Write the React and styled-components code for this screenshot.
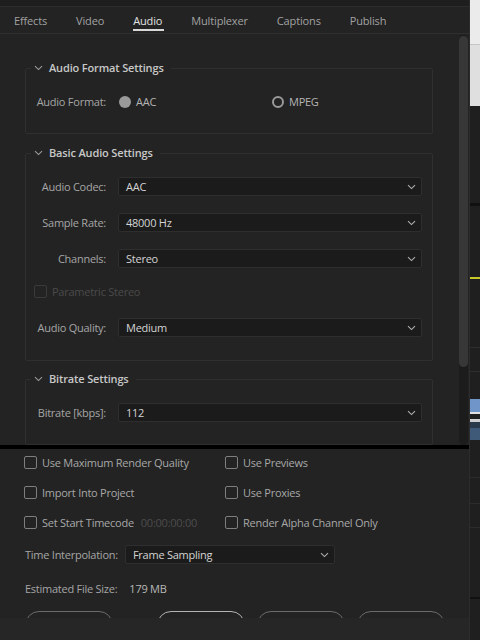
import React from "react";
import styled, { createGlobalStyle } from "styled-components";

const FONT = "'Open Sans', 'Noto Sans', 'Liberation Sans', sans-serif";

const GlobalStyle = createGlobalStyle`
  html, body {
    margin: 0;
    padding: 0;
    background: #1e1e1e;
  }
  body {
    font-family: ${FONT};
    font-size: 11px;
    letter-spacing: -0.25px;
    color: #a8a8a8;
  }
  * {
    box-sizing: border-box;
  }
`;

const Screen = styled.div`
  display: flex;
  width: 480px;
  height: 640px;
  overflow: hidden;
  background: #1e1e1e;
`;

const Dialog = styled.div`
  width: 470px;
  height: 100%;
  display: flex;
  flex-direction: column;
  background: #232323;
  border-right: 1px solid #2c2c2c;
`;

const TopGap = styled.div`
  height: 7px;
  flex: none;
  background: #1e1e1e;
  border-bottom: 1px solid #2c2c2c;
`;

const TabBar = styled.div`
  height: 27px;
  flex: none;
  display: flex;
  align-items: stretch;
  gap: 29px;
  padding-left: 14px;
  border-bottom: 1px solid #2f2f2f;
`;

const Tab = styled.div`
  position: relative;
  display: flex;
  align-items: center;
  font-size: 11px;
  letter-spacing: -0.15px;
  color: ${(p) => (p.$active ? "#e2e2e2" : "#a2a2a2")};

  &::after {
    content: "";
    display: ${(p) => (p.$active ? "block" : "none")};
    position: absolute;
    left: 0;
    right: -2px;
    bottom: 2px;
    height: 2px;
    background: #d8d8d8;
  }
`;

const Body = styled.div`
  height: 411px;
  flex: none;
  display: flex;
`;

const Content = styled.div`
  flex: 1;
  overflow: hidden;
  padding: 26px 0 0 25px;
`;

const ScrollTrack = styled.div`
  width: 9px;
  margin: 1px 1px 0 0;
  background: #1c1c1c;
  border-radius: 5px;
`;

const ScrollThumb = styled.div`
  height: 331px;
  margin-top: 1px;
  background: #373737;
  border-radius: 5px;
`;

const Section = styled.fieldset`
  width: 408px;
  margin: 0 0 ${(p) => p.$mb || 11}px;
  padding: 0;
  border: 1px solid #2f2f2f;
  border-radius: 2px;
  min-width: 0;
`;

const Legend = styled.legend`
  display: flex;
  align-items: center;
  gap: 6px;
  margin-left: 5px;
  padding: 0 7px 0 3px;
  line-height: 16px;
  font-size: 11px;
  font-weight: 600;
  letter-spacing: -0.15px;
  color: #c8c8c8;
`;

const SectionBody = styled.div`
  display: flex;
  flex-direction: column;
  padding: 16px 10px ${(p) => p.$pb || 22}px 0;
`;

const Row = styled.div`
  display: flex;
  align-items: center;
  height: 19px;
  margin-top: ${(p) => p.$mt || 0}px;
`;

const Label = styled.div`
  width: 92px;
  flex: none;
  padding-right: 12px;
  text-align: right;
  white-space: nowrap;
  color: #a6a6a6;
`;

const Select = styled.div`
  flex: ${(p) => (p.$width ? "none" : "1")};
  width: ${(p) => (p.$width ? `${p.$width}px` : "auto")};
  height: 19px;
  display: flex;
  align-items: center;
  justify-content: space-between;
  padding: 0 5px 0 7px;
  background: #1b1b1b;
  border: 1px solid #2e2e2e;
  border-radius: 2px;
  color: #d4d4d4;
`;

const RadioOption = styled.div`
  display: flex;
  align-items: center;
  gap: 5px;
  width: ${(p) => p.$width || "auto"};
  margin-left: ${(p) => p.$ml || 0}px;
  color: #b4b4b4;
`;

const RadioDot = styled.span`
  width: 12px;
  height: 12px;
  border-radius: 50%;
  background: ${(p) => (p.$on ? "#9a9a9a" : "transparent")};
  border: ${(p) => (p.$on ? "none" : "2px solid #9a9a9a")};
`;

const CheckItem = styled.div`
  display: flex;
  align-items: center;
  gap: 5px;
  height: 13px;
  white-space: nowrap;
  margin-left: ${(p) => p.$ml || 0}px;
  color: ${(p) => (p.$dim ? "#4a4a4a" : "#a8a8a8")};
`;

const CheckBox = styled.span`
  width: 13px;
  height: 13px;
  flex: none;
  border-radius: 2px;
  border: 1.5px solid ${(p) => (p.$dim ? "#3a3a3a" : "#7e7e7e")};
`;

const DimText = styled.span`
  margin-left: 2px;
  color: #4c4c4c;
`;

const BlackBar = styled.div`
  height: 4px;
  flex: none;
  background: #000;
`;

const BottomPanel = styled.div`
  flex: none;
  display: flex;
  flex-direction: column;
  padding: 7px 0 0 24px;
`;

const CheckGrid = styled.div`
  display: grid;
  grid-template-columns: 201px auto;
  grid-auto-rows: 13px;
  row-gap: 17px;
`;

const InfoRow = styled.div`
  display: flex;
  align-items: center;
  height: ${(p) => p.$h || 19}px;
  margin-top: ${(p) => p.$mt || 0}px;
  padding-left: 1px;
  gap: ${(p) => p.$gap || 7}px;
  color: #a6a6a6;
`;

const Value = styled.span`
  color: #b8b8b8;
`;

const ButtonRow = styled.div`
  display: flex;
  height: 7px;
  margin-top: 15px;
  overflow: hidden;
  padding-left: 1px;
`;

const Button = styled.div`
  width: 88px;
  height: 28px;
  flex: none;
  margin-right: ${(p) => p.$mr || 12}px;
  border-radius: 14px;
  border: 1.5px solid ${(p) => (p.$primary ? "#b4b4b4" : "#6c6c6c")};
`;

const Footer = styled.div`
  flex: 1;
  background: #262626;
`;

const SideStrip = styled.div`
  width: 10px;
  height: 100%;
  display: flex;
  flex-direction: column;
  background: #1e1e1e;
`;

const Band = styled.div`
  height: ${(p) => p.$h}px;
  flex: none;
  background: ${(p) => p.$c};
`;

const Chevron = ({ color = "#b0b0b0" }) => (
  <svg width="9" height="6" viewBox="0 0 9 6">
    <path d="M1 1.2 L4.5 4.6 L8 1.2" fill="none" stroke={color} strokeWidth="1.1" />
  </svg>
);

const Dropdown = ({ value, width }) => (
  <Select $width={width}>
    <span>{value}</span>
    <Chevron />
  </Select>
);

const SectionTitle = ({ children }) => (
  <Legend>
    <Chevron color="#9c9c9c" />
    <span>{children}</span>
  </Legend>
);

const Check = ({ label, dim, ml, extra }) => (
  <CheckItem $dim={dim} $ml={ml}>
    <CheckBox $dim={dim} />
    <span>{label}</span>
    {extra && <DimText>{extra}</DimText>}
  </CheckItem>
);

const tabs = ["Effects", "Video", "Audio", "Multiplexer", "Captions", "Publish"];

const bands = [
  [44, "#ebebeb"],
  [1, "#c6c6c6"],
  [61, "#dfdfdf"],
  [97, "#1f1f1f"],
  [3, "#111111"],
  [71, "#1f1f1f"],
  [2, "#c8c82a"],
  [68, "#1f1f1f"],
  [1, "#2e2e2e"],
  [23, "#1f1f1f"],
  [1, "#2e2e2e"],
  [27, "#1f1f1f"],
  [13, "#6f95c9"],
  [2, "#e0e0e0"],
  [5, "#1f1f1f"],
  [3, "#d0d0d0"],
  [6, "#2a3a4a"],
  [12, "#3e5a78"],
  [37, "#1f1f1f"],
  [1, "#2c2c2c"],
  [25, "#1f1f1f"],
  [1, "#2c2c2c"],
  [23, "#1f1f1f"],
  [1, "#2c2c2c"],
  [69, "#1f1f1f"],
  [2, "#111111"],
  [41, "#1f1f1f"],
];

export default function App() {
  return (
    <>
      <GlobalStyle />
      <Screen>
        <Dialog>
          <TopGap />
          <TabBar>
            {tabs.map((t) => (
              <Tab key={t} $active={t === "Audio"}>
                {t}
              </Tab>
            ))}
          </TabBar>

          <Body>
            <Content>
              <Section>
                <SectionTitle>Audio Format Settings</SectionTitle>
                <SectionBody>
                  <Row>
                    <Label>Audio Format:</Label>
                    <RadioOption $width="153px" $ml={1}>
                      <RadioDot $on />
                      AAC
                    </RadioOption>
                    <RadioOption>
                      <RadioDot />
                      MPEG
                    </RadioOption>
                  </Row>
                </SectionBody>
              </Section>

              <Section $mb={10}>
                <SectionTitle>Basic Audio Settings</SectionTitle>
                <SectionBody $pb={23}>
                  <Row>
                    <Label>Audio Codec:</Label>
                    <Dropdown value="AAC" />
                  </Row>
                  <Row $mt={17}>
                    <Label>Sample Rate:</Label>
                    <Dropdown value="48000 Hz" />
                  </Row>
                  <Row $mt={17}>
                    <Label>Channels:</Label>
                    <Dropdown value="Stereo" />
                  </Row>
                  <Row $mt={14}>
                    <Check label="Parametric Stereo" dim ml={8} />
                  </Row>
                  <Row $mt={17}>
                    <Label>Audio Quality:</Label>
                    <Dropdown value="Medium" />
                  </Row>
                </SectionBody>
              </Section>

              <Section>
                <SectionTitle>Bitrate Settings</SectionTitle>
                <SectionBody $pt={17}>
                  <Row>
                    <Label>Bitrate [kbps]:</Label>
                    <Dropdown value="112" />
                  </Row>
                </SectionBody>
              </Section>
            </Content>
            <ScrollTrack>
              <ScrollThumb />
            </ScrollTrack>
          </Body>

          <BlackBar />

          <BottomPanel>
            <CheckGrid>
              <Check label="Use Maximum Render Quality" />
              <Check label="Use Previews" />
              <Check label="Import Into Project" />
              <Check label="Use Proxies" />
              <Check label="Set Start Timecode" extra="00:00:00:00" />
              <Check label="Render Alpha Channel Only" />
            </CheckGrid>

            <InfoRow $mt={16}>
              <span>Time Interpolation:</span>
              <Dropdown value="Frame Sampling" width={210} />
            </InfoRow>

            <InfoRow $mt={16} $h={16} $gap={12}>
              <span>Estimated File Size:</span>
              <Value>179 MB</Value>
            </InfoRow>

            <ButtonRow>
              <Button $mr={44} />
              <Button $primary />
              <Button />
              <Button />
            </ButtonRow>
          </BottomPanel>

          <Footer />
        </Dialog>

        <SideStrip>
          {bands.map(([h, c], i) => (
            <Band key={i} $h={h} $c={c} />
          ))}
        </SideStrip>
      </Screen>
    </>
  );
}
